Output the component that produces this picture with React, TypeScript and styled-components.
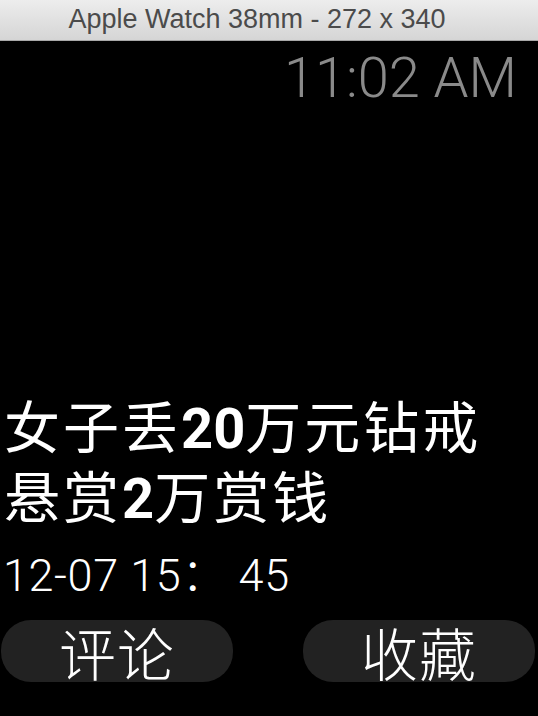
import React from "react";
import styled, { createGlobalStyle } from "styled-components";

const Global = createGlobalStyle`
  html, body { margin: 0; padding: 0; background: #000; }
  #root { width: 538px; height: 716px; overflow: hidden; }
`;

const Window = styled.div`
  width: 538px;
  height: 716px;
  display: flex;
  flex-direction: column;
  background: #000;
`;

const TitleBar = styled.div`
  height: 41px;
  flex: none;
  display: flex;
  align-items: center;
  justify-content: center;
  background: linear-gradient(#ededed, #d5d5d5);
  border-bottom: 1px solid #a8a8a8;
  font-family: "Liberation Sans", Arial, sans-serif;
  font-size: 27px;
  color: #4b4b4b;
  padding: 0 24px 1px 0;
  box-sizing: border-box;
`;

const Screen = styled.div`
  flex: 1;
  display: flex;
  flex-direction: column;
  color: #fff;
  font-family: Roboto, "Noto Sans CJK SC", sans-serif;
`;

const Clock = styled.div`
  align-self: flex-end;
  margin-right: 21px;
  margin-top: 5px;
  font-size: 56px;
  font-weight: 300;
  line-height: 64px;
  color: #8a8a8a;
`;

const Headline = styled.div`
  margin-top: 284px;
  padding-left: 4px;
  font-size: 56px;
  line-height: 70px;
  letter-spacing: 3px;
  font-family: Roboto, "Noto Sans CJK SC", sans-serif;
`;

const Num = styled.span`
  font-weight: 700;
  letter-spacing: 0;
`;

const DateLine = styled.div`
  margin-top: 16px;
  padding-left: 3px;
  font-size: 45px;
  font-weight: 300;
  line-height: 52px;
  letter-spacing: 0.6px;
`;

const Actions = styled.div`
  margin-top: 18px;
  display: flex;
  justify-content: space-between;
  padding: 0 3px 0 1px;
`;

const ActionButton = styled.button`
  width: 232px;
  height: 62px;
  border: none;
  border-radius: 30px;
  background: #222;
  color: #fff;
  font-family: "Noto Sans CJK SC", sans-serif;
  font-size: 57px;
  font-weight: 300;
  line-height: 62px;
  padding: 0;
  letter-spacing: 1px;
  display: flex;
  align-items: center;
  justify-content: center;
`;

export default function App() {
  return (
    <Window>
      <Global />
      <TitleBar>Apple Watch 38mm - 272 x 340</TitleBar>
      <Screen>
        <Clock>11:02 AM</Clock>
        <Headline>
          女子丢<Num>20</Num>万元钻戒
          <br />
          悬赏<Num>2</Num>万赏钱
        </Headline>
        <DateLine>12-07 15： 45</DateLine>
        <Actions>
          <ActionButton>评论</ActionButton>
          <ActionButton>收藏</ActionButton>
        </Actions>
      </Screen>
    </Window>
  );
}
